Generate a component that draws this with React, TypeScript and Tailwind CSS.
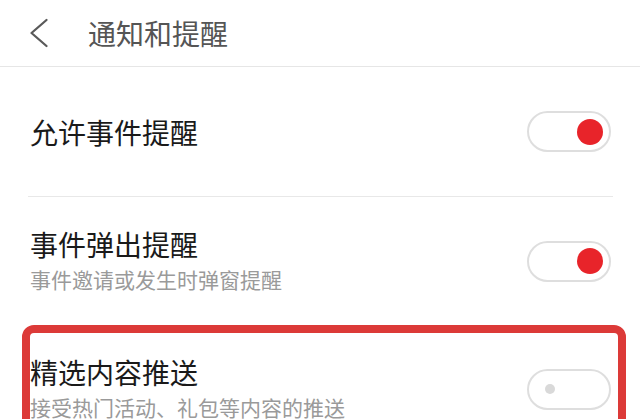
import React from "react";

function Toggle({ on }: { on: boolean }) {
  return (
    <div className="relative flex h-[41px] w-[84px] shrink-0 items-center rounded-full border-[2.5px] border-[#dedede] bg-white">
      {on ? (
        <div className="ml-auto mr-[6px] h-[26px] w-[26px] rounded-full bg-[#e8242a]" />
      ) : (
        <div className="ml-[16px] h-[10px] w-[10px] rounded-full bg-[#d9d9d9]" />
      )}
    </div>
  );
}

export default function App() {
  const font = { fontFamily: '"Noto Sans CJK SC", "Noto Sans", sans-serif' };
  return (
    <div className="h-[419px] w-[640px] overflow-hidden bg-white" style={font}>
      <div className="flex h-[67px] items-center border-b border-[#e6e6e6]">
        <svg className="ml-[29px]" width="20" height="30" viewBox="0 0 20 30" fill="none">
          <path d="M17.5 2 L2.5 15 L17.5 28" stroke="#5a5a5a" strokeWidth="2.3" strokeLinecap="round" strokeLinejoin="round" />
        </svg>
        <span className="ml-[39px] text-[28px] leading-[36px] text-[#555555]">通知和提醒</span>
      </div>

      <div className="flex h-[129px] items-center pl-[30px] pr-[29px]">
        <span className="text-[28px] leading-[36px] text-[#1a1a1a]">允许事件提醒</span>
        <div className="ml-auto">
          <Toggle on />
        </div>
      </div>
      <div className="ml-[28px] mr-[27px] h-px bg-[#e8e8e8]" />

      <div className="flex h-[128px] items-center pl-[30px] pr-[29px]">
        <div className="flex flex-col">
          <span className="text-[28px] leading-[36px] text-[#1a1a1a]">事件弹出提醒</span>
          <span className="text-[21px] leading-[34px] text-[#9a9a9a]">事件邀请或发生时弹窗提醒</span>
        </div>
        <div className="ml-auto">
          <Toggle on />
        </div>
      </div>

      <div className="ml-[22px] w-[604px] rounded-[12px] border-[8.5px] border-[#dc3a38]">
        <div className="flex h-[112px] items-center pr-[7px]">
          <div className="flex flex-col">
            <span className="text-[28px] leading-[36px] text-[#1a1a1a]">精选内容推送</span>
            <span className="text-[21px] leading-[34px] text-[#9a9a9a]">接受热门活动、礼包等内容的推送</span>
          </div>
          <div className="ml-auto">
            <Toggle on={false} />
          </div>
        </div>
      </div>
    </div>
  );
}
